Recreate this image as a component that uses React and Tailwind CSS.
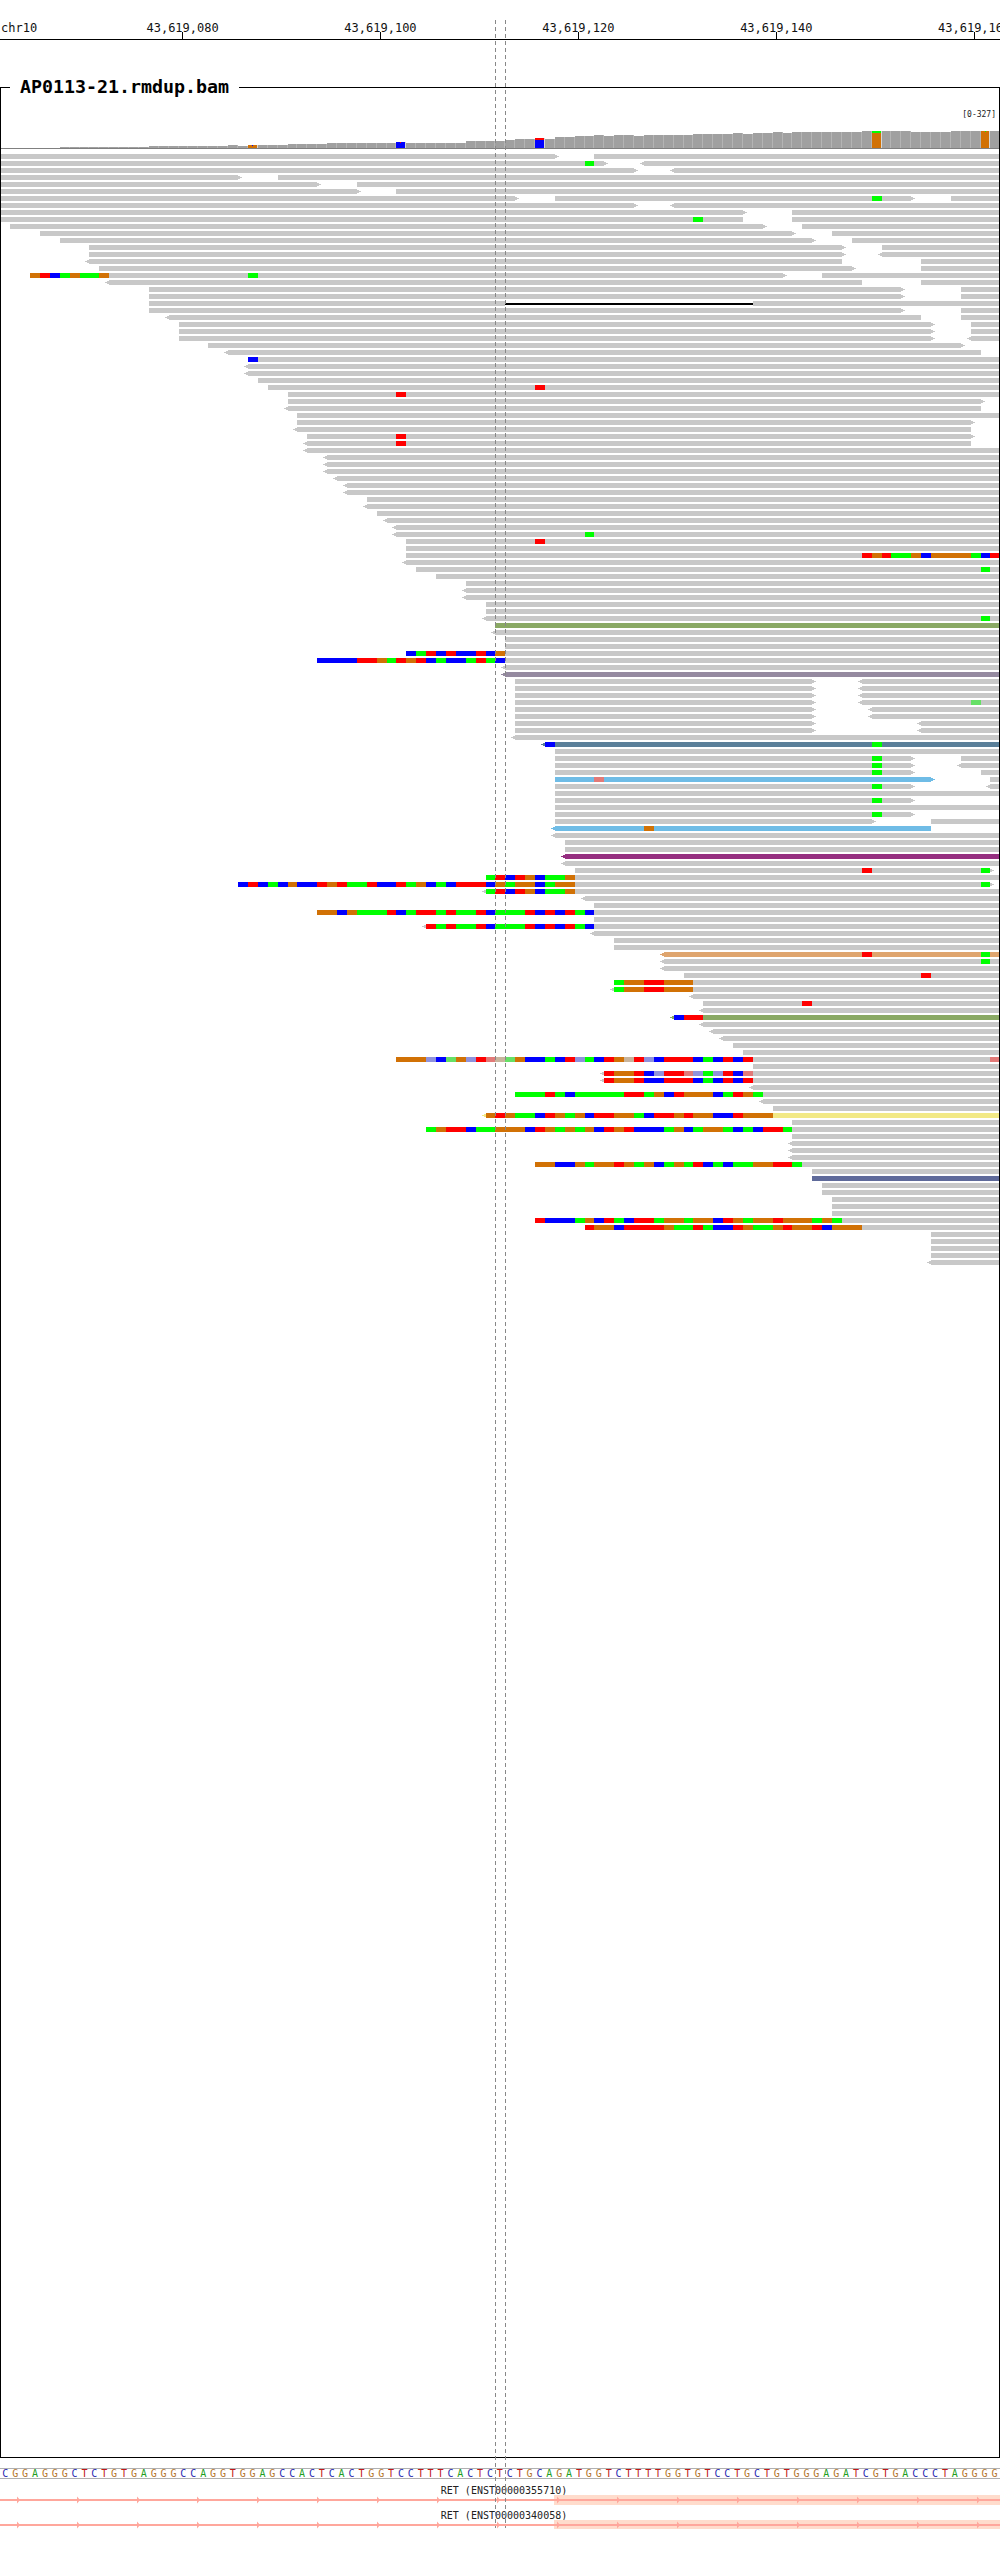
const E = 51 // read runs off the right edge of the view

const BASES = {
  r: '#ff0000', g: '#00ff00', b: '#0000ff', o: '#d17105',
  // low quality mismatches are drawn paler
  p: '#e27a78', l: '#8f92dc', q: '#66e066', t: '#c8b49c',
}
const OLIVE = '#8aa964'
const MAUVE = '#958aa0'
const SLATE = '#5a7f99'
const SKY = '#6fbce6'
const PLUM = '#952f80'
const SAND = '#dfa56e'
const LEMON = '#f2e986'
const NAVY = '#5f6a9a'

const GREEN38 = '38:g'

// one entry per pileup row: [start, end, arrow, mismatches, colour]
const ROWS = [
  [[-50, 6, 'r'], [10, E]],
  [[-50, 11, 'r', '9:g'], [15, E, 'l']],
  [[-50, 14, 'r'], [18, E, 'l']],
  [[-50, -26, 'r'], [-22, E]],
  [[-50, -18, 'r'], [-14, E]],
  [[-50, -14, 'r'], [-10, E]],
  [[-50, 2, 'r'], [6, 42, 'r', GREEN38], [46, E]],
  [[-50, 14, 'r'], [18, E, 'l']],
  [[-50, 25, 'r'], [30, E]],
  [[-50, 25, '', '20:g'], [30, E]],
  [[-49, 27, 'r'], [31, E]],
  [[-46, 30, 'r'], [34, E]],
  [[-44, 32, 'r'], [36, E]],
  [[-41, 35, 'r'], [39, E]],
  [[-41, 35, 'r'], [39, E, 'l']],
  [[-41, 35, 'l'], [43, E]],
  [[-40, 36, 'r'], [43, E]],
  [[-47, 29, 'r', '-47:orbgoggo -25:g'], [33, E]],
  [[-39, 37, 'l'], [43, E]],
  [[-35, 41, 'r'], [47, E]],
  [[-35, 41, 'r'], [47, E]],
  [[-35, 1], [26, E]],
  [[-35, 41, 'r'], [47, E]],
  [[-33, 43, 'l'], [47, E]],
  [[-32, 44, 'r'], [48, E]],
  [[-32, 44, 'r'], [48, E]],
  [[-32, 44, 'r'], [48, E, 'l']],
  [[-29, 47, 'r']],
  [[-27, 49, 'l']],
  [[-25, E, '', '-25:b']],
  [[-25, E, 'l']],
  [[-25, E, 'l']],
  [[-24, E]],
  [[-23, E, '', '4:r']],
  [[-21, E, '', '-10:r']],
  [[-21, 49, 'r']],
  [[-21, 49, 'l']],
  [[-20, E]],
  [[-20, 48, 'r']],
  [[-20, 48, 'l']],
  [[-19, 48, 'r', '-10:r']],
  [[-19, 48, 'l', '-10:r']],
  [[-19, E, 'l']],
  [[-17, E, 'l']],
  [[-17, E, 'l']],
  [[-17, E, 'l']],
  [[-16, E, 'l']],
  [[-15, E, 'l']],
  [[-15, E, 'l']],
  [[-13, E]],
  [[-13, E, 'l']],
  [[-12, E]],
  [[-11, E, 'l']],
  [[-10, E, 'l']],
  [[-10, E, 'l', '9:g']],
  [[-9, E, '', '4:r']],
  [[-9, E]],
  [[-9, E, '', '37:rorggoboooogbr']],
  [[-9, E, 'l']],
  [[-8, E, '', '49:g']],
  [[-6, E]],
  [[-3, E]],
  [[-3, E, 'l']],
  [[-3, E, 'l']],
  [[-1, E]],
  [[-1, E]],
  [[-1, E, 'l', '49:g']],
  [[0, E, '', '', OLIVE]],
  [[0, E, 'l']],
  [[1, E]],
  [[1, E]],
  [[-9, E, '', '-9:bgrbrbbrbo']],
  [[-18, E, '', '-18:bbbbrrogrorbgbbgrgb']],
  [[1, E, 'l']],
  [[1, E, 'l', '', MAUVE]],
  [[2, 32, 'r'], [37, E, 'l']],
  [[2, 32, 'r'], [37, E, 'l']],
  [[2, 32, 'r'], [37, E, 'l']],
  [[2, 32, 'r'], [37, E, 'l', '48:q']],
  [[2, 32, 'r'], [38, E, 'l']],
  [[2, 32, 'r'], [38, E, 'l']],
  [[2, 32, 'r'], [43, E, 'l']],
  [[2, 32, 'r'], [43, E, 'l']],
  [[2, E, 'l']],
  [[5, E, 'l', '5:b 38:g', SLATE]],
  [[6, E]],
  [[6, 42, 'r', GREEN38], [47, E]],
  [[6, 42, 'r', GREEN38], [47, E, 'l']],
  [[6, 42, 'r', GREEN38], [49, E]],
  [[6, 44, 'r', '10:p', SKY], [50, E]],
  [[6, 42, 'r', GREEN38], [50, E, 'l']],
  [[6, E]],
  [[6, 42, 'r', GREEN38]],
  [[6, E]],
  [[6, 42, 'r', GREEN38]],
  [[6, 38, 'r'], [44, E]],
  [[6, 44, 'l', '15:o', SKY]],
  [[6, E, 'l']],
  [[7, E]],
  [[7, E]],
  [[7, E, 'l', '', PLUM]],
  [[7, E, 'l']],
  [[8, 50, 'r', '37:r 49:g']],
  [[-1, E, '', '-1:grbrobggo']],
  [[-26, 50, 'r', '-26:brbgbobbrorggrbbrgobgbrrrbogoobgoo 49:g']],
  [[-1, E, 'l', '-1:grbrobggo']],
  [[9, E, 'l']],
  [[10, E]],
  [[-18, E, '', '-18:oobogggrbgrrgrggrbgggrbrbrgb']],
  [[10, E]],
  [[-7, E, 'l', '-7:rgrggrbgggrbrbrgb']],
  [[10, E, 'l']],
  [[12, E]],
  [[12, E]],
  [[17, E, 'l', '37:r 49:g', SAND]],
  [[17, E, 'l', '49:g']],
  [[17, E, 'l']],
  [[19, E, '', '43:r']],
  [[12, E, '', '12:goorrooo']],
  [[12, E, 'l', '12:goorrooo']],
  [[20, E, 'l']],
  [[21, E, '', '31:r']],
  [[21, E, 'l']],
  [[18, E, 'l', '18:brr', OLIVE]],
  [[21, E, 'l']],
  [[22, E, 'l']],
  [[23, E, 'l']],
  [[24, E]],
  [[25, E]],
  [[-10, E, '', '-10:ooolbqolrptqobbgbrlgbrotrlbrrrbgbrbr 50:p']],
  [[26, E]],
  [[11, E, 'l', '11:roorblrrplglrbp']],
  [[11, E, 'l', '11:roorbbrrrbgbrbr']],
  [[26, E, 'l']],
  [[2, E, '', '2:gggrgbgggggrrgobrooobgrog']],
  [[27, E, 'l']],
  [[28, E]],
  [[-1, E, 'l', '-1:oroggbrogobrroogbrroroobbrooo', LEMON]],
  [[30, E]],
  [[-7, E, '', '-7:gorrbggooobrogogobrorbbbgobgoogbgbrrg']],
  [[30, E]],
  [[30, E, 'l']],
  [[30, E, 'l']],
  [[30, E, 'l']],
  [[4, E, '', '4:oobbogoorogobgogrbgbggoorrg']],
  [[32, E]],
  [[32, E, '', '', NAVY]],
  [[33, E]],
  [[33, E]],
  [[34, E]],
  [[34, E]],
  [[34, E]],
  [[4, E, '', '4:rbbbgobrgbrrgoogoobrogoorooogog']],
  [[9, E, '', '9:roobrrrroggrgbbroggoroorbooo']],
  [[44, E]],
  [[44, E]],
  [[44, E]],
  [[44, E]],
  [[44, E, 'l']],
]

// coverage bar heights for bases -44..50
const COVERAGE = [
  1, 1, 1, 1, 1, 1, 1, 1, 1,
  2, 2, 2, 2, 2, 2, 2, 2,
  3, 2, 3, 3, 3, 3,
  4, 4, 4, 4,
  5, 5, 5, 5, 5, 5, 5,
  6,
  5, 5, 5, 5, 5, 5,
  7, 7, 7, 7, 8, 9, 9, 10, 9,
  11, 11, 12, 12, 13, 12, 13, 13, 12,
  13, 13, 13, 13, 13,
  14, 14, 14, 14, 15, 14, 15, 15, 16, 15,
  16, 16, 16, 16, 16, 16, 16,
  17, 17, 17, 17, 17,
  16, 16, 16, 16,
  17, 17, 17, 17, 17,
]

// base: whole bar colour, top: [colour, px] of a full width cap, dot: colour of a tiny mark
const COVERAGE_MARKS = {
  '-25': { base: '#d17105', dot: '#0000ff' },
  '-10': { base: '#0000ff', dot: '#ff0000' },
  4: { base: '#0000ff', top: ['#ff0000', 2] },
  38: { base: '#d17105', top: ['#00ff00', 2] },
  49: { base: '#d17105', dot: '#00ff00' },
}

const SEQUENCE =
  'CGGAGGGCTCTGTGAGGGCCAGGTGGAGCCACTCACTGGTCCTTTCACTC' +
  'TCTGCAGATGGTCTTTTGGTGTCCTGCTGTGGGAGATCGTGACCCTAGGGG'

const LETTER_COLORS = {
  A: 'text-[#1f9f1f]',
  C: 'text-[#2a2ab0]',
  G: 'text-[#b4752a]',
  T: 'text-[#c01818]',
}

const TICKS = ['43,619,080', '43,619,100', '43,619,120', '43,619,140', '43,619,160']

// pixel edge of a base, as the igv renderer rounds it
const px = (k) => Math.round(495.4 + 9.9 * k)
const rowY = (i) => 154 + 7 * i

function parseMismatches(text) {
  if (!text) return []
  const out = []
  text.split(' ').forEach((chunk) => {
    const [from, letters] = chunk.split(':')
    ;[...letters].forEach((c, n) => out.push([Number(from) + n, BASES[c]]))
  })
  return out
}

function Read({ read, y }) {
  const [start, end, arrow, mism, color = '#c8c8c8'] = read
  const x0 = px(start)
  const x1 = px(end)
  return (
    <g>
      <rect x={x0} y={y} width={x1 - x0} height={5} fill={color} />
      {parseMismatches(mism).map(([k, c]) => (
        <rect key={k} x={px(k)} y={y} width={px(k + 1) - px(k)} height={5} fill={c} />
      ))}
      {arrow === 'r' && (
        <>
          <rect x={x1} y={y + 1} width={2} height={3} fill={color} />
          <rect x={x1 + 2} y={y + 2} width={2} height={1} fill={color} />
        </>
      )}
      {arrow === 'l' && (
        <>
          <rect x={x0 - 2} y={y + 1} width={2} height={3} fill={color} />
          <rect x={x0 - 4} y={y + 2} width={2} height={1} fill={color} />
        </>
      )}
    </g>
  )
}

function Coverage() {
  return (
    <g>
      {COVERAGE.map((h, n) => {
        const k = n - 44
        const x = px(k)
        const w = px(k + 1) - x - 1
        const mark = COVERAGE_MARKS[k]
        return (
          <g key={k}>
            <rect x={x} y={148 - h} width={w} height={h} fill={mark ? mark.base : '#a0a0a0'} />
            <rect x={x + w} y={148 - h} width={1} height={h} fill={mark ? '#d8d8d8' : '#b4b4b4'} />
            {mark?.top && <rect x={x} y={148 - h} width={w} height={mark.top[1]} fill={mark.top[0]} />}
            {mark?.dot && <rect x={x + 4} y={148 - h} width={1} height={1} fill={mark.dot} />}
          </g>
        )
      })}
      <rect x={0} y={148} width={1000} height={1} fill="#808080" />
    </g>
  )
}

function Pileup() {
  return (
    <svg width="998" height="1180" className="block" shapeRendering="crispEdges">
      <g transform="translate(-1 -88)">
        <Coverage />
        {ROWS.map((row, i) => (
          <g key={i}>
            {row.map((read, n) => (
              <Read key={n} read={read} y={rowY(i)} />
            ))}
          </g>
        ))}
        {/* deletion in row 21 */}
        <rect x={px(1)} y={303} width={px(26) - px(1)} height={2} fill="#000000" />
      </g>
    </svg>
  )
}

function GeneTrack({ name, height }) {
  return (
    <div className="flex flex-col">
      <div className="h-[11px] pl-[8px] text-center text-[10px] leading-[13px] text-[#222]">{name}</div>
      <svg width="1000" height={height} className="block">
        <rect x="554" y="0" width="446" height={height} fill="#ffdccc" />
        <rect x="0" y="4" width="1000" height="2" fill="#ffa79c" />
        {Array.from({ length: 17 }, (_, n) => 17 + 60 * n).map((x) => (
          <path key={x} d={`M${x} 1.5L${x + 3} 5L${x} 8.5Z`} fill="#ffa79c" />
        ))}
      </svg>
    </div>
  )
}

export default function App() {
  return (
    <div className="relative h-[2549px] w-[1000px] overflow-hidden bg-white font-['DejaVu_Sans_Mono',monospace] text-[#111]">
      {/* Ruler */}
      <div className="flex h-[40px] items-end overflow-hidden border-b border-black">
        <div className="w-[83.65px] flex-none self-start pl-px pt-[21px] text-[12px] leading-[14px]">chr10</div>
        {TICKS.map((t) => (
          <div key={t} className="flex w-[197.9px] flex-none flex-col items-center">
            <span className="whitespace-nowrap text-[12px] leading-[14px]">{t}</span>
            <span className="-mt-[3px] h-[7px] w-px bg-black" />
          </div>
        ))}
      </div>

      {/* Track panel */}
      <div className="relative mt-[47px] h-[2371px] border border-black">
        <span className="absolute -top-[15px] left-[9px] bg-white px-[10px] text-[18.3px] font-bold leading-[28px] text-black">
          AP0113-21.rmdup.bam
        </span>
        <span className="absolute right-[3px] top-[22px] text-[8px] leading-[10px] text-[#222]">[0-327]</span>
        <Pileup />
      </div>

      {/* Reference sequence */}
      <div className="mt-[10px] flex h-[11px] items-center border-y border-[#b0b0b0] pl-[0.4px]">
        {[...SEQUENCE].map((c, i) => (
          <span key={i} className={`w-[9.9px] flex-none text-center text-[10px] leading-[9px] ${LETTER_COLORS[c]}`}>
            {c}
          </span>
        ))}
      </div>

      {/* Genes */}
      <div className="mt-[5px] flex flex-col gap-[4px]">
        <GeneTrack name="RET (ENST00000355710)" height={10} />
        <GeneTrack name="RET (ENST00000340058)" height={9} />
      </div>

      {/* Region of interest markers */}
      <svg className="absolute left-0 top-0" width="1000" height="2549">
        <line x1="495.5" y1="20" x2="495.5" y2="2528" stroke="#888888" strokeDasharray="4 3" />
        <line x1="505.5" y1="20" x2="505.5" y2="2528" stroke="#888888" strokeDasharray="4 3" />
      </svg>
    </div>
  )
}
